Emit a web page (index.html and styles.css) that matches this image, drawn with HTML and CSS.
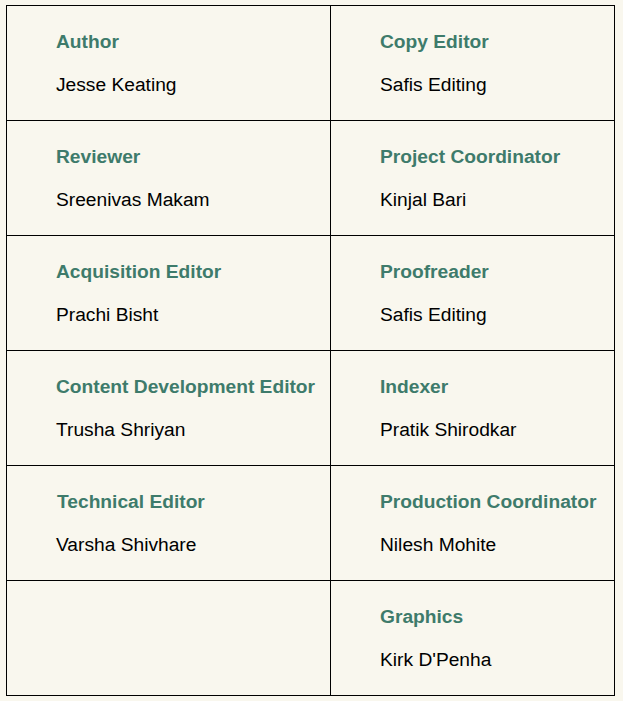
FILE: index.html
```html
<!DOCTYPE html>
<html>
<head>
<meta charset="utf-8">
<link rel="stylesheet" href="styles.css">
</head>
<body>
<table class="credits">
  <colgroup><col class="c1"><col class="c2"></colgroup>
  <tr>
    <td><p class="role">Author</p><p class="name">Jesse Keating</p></td>
    <td><p class="role">Copy Editor</p><p class="name">Safis Editing</p></td>
  </tr>
  <tr>
    <td><p class="role">Reviewer</p><p class="name">Sreenivas Makam</p></td>
    <td><p class="role">Project Coordinator</p><p class="name">Kinjal Bari</p></td>
  </tr>
  <tr>
    <td><p class="role">Acquisition Editor</p><p class="name">Prachi Bisht</p></td>
    <td><p class="role">Proofreader</p><p class="name">Safis Editing</p></td>
  </tr>
  <tr>
    <td><p class="role">Content Development Editor</p><p class="name">Trusha Shriyan</p></td>
    <td><p class="role">Indexer</p><p class="name">Pratik Shirodkar</p></td>
  </tr>
  <tr>
    <td><p class="role nudge">Technical Editor</p><p class="name">Varsha Shivhare</p></td>
    <td><p class="role">Production Coordinator</p><p class="name">Nilesh Mohite</p></td>
  </tr>
  <tr>
    <td></td>
    <td><p class="role">Graphics</p><p class="name">Kirk D'Penha</p></td>
  </tr>
</table>
</body>
</html>
```

FILE: styles.css
```css
html, body {
  background: #f9f7ee;
}
body {
  margin: 5px 0 0 6px;
  font-family: "Liberation Sans", Arial, sans-serif;
  font-size: 19.2px;
  color: #000;
}
.credits {
  border-collapse: collapse;
  table-layout: fixed;
  width: 608px;
}
.c1 { width: 324px; }
.c2 { width: 284px; }
.credits td {
  border: 1px solid #000;
  height: 115px;
  padding: 0 0 0 49px;
  vertical-align: top;
  box-sizing: border-box;
}
.role {
  margin: 25px 0 0;
  font-weight: bold;
  color: #3e7b6b;
  line-height: 22px;
  white-space: nowrap;
}
.nudge { margin-left: 1px; }
.name {
  margin: 21px 0 0;
  line-height: 22px;
  white-space: nowrap;
}
```
